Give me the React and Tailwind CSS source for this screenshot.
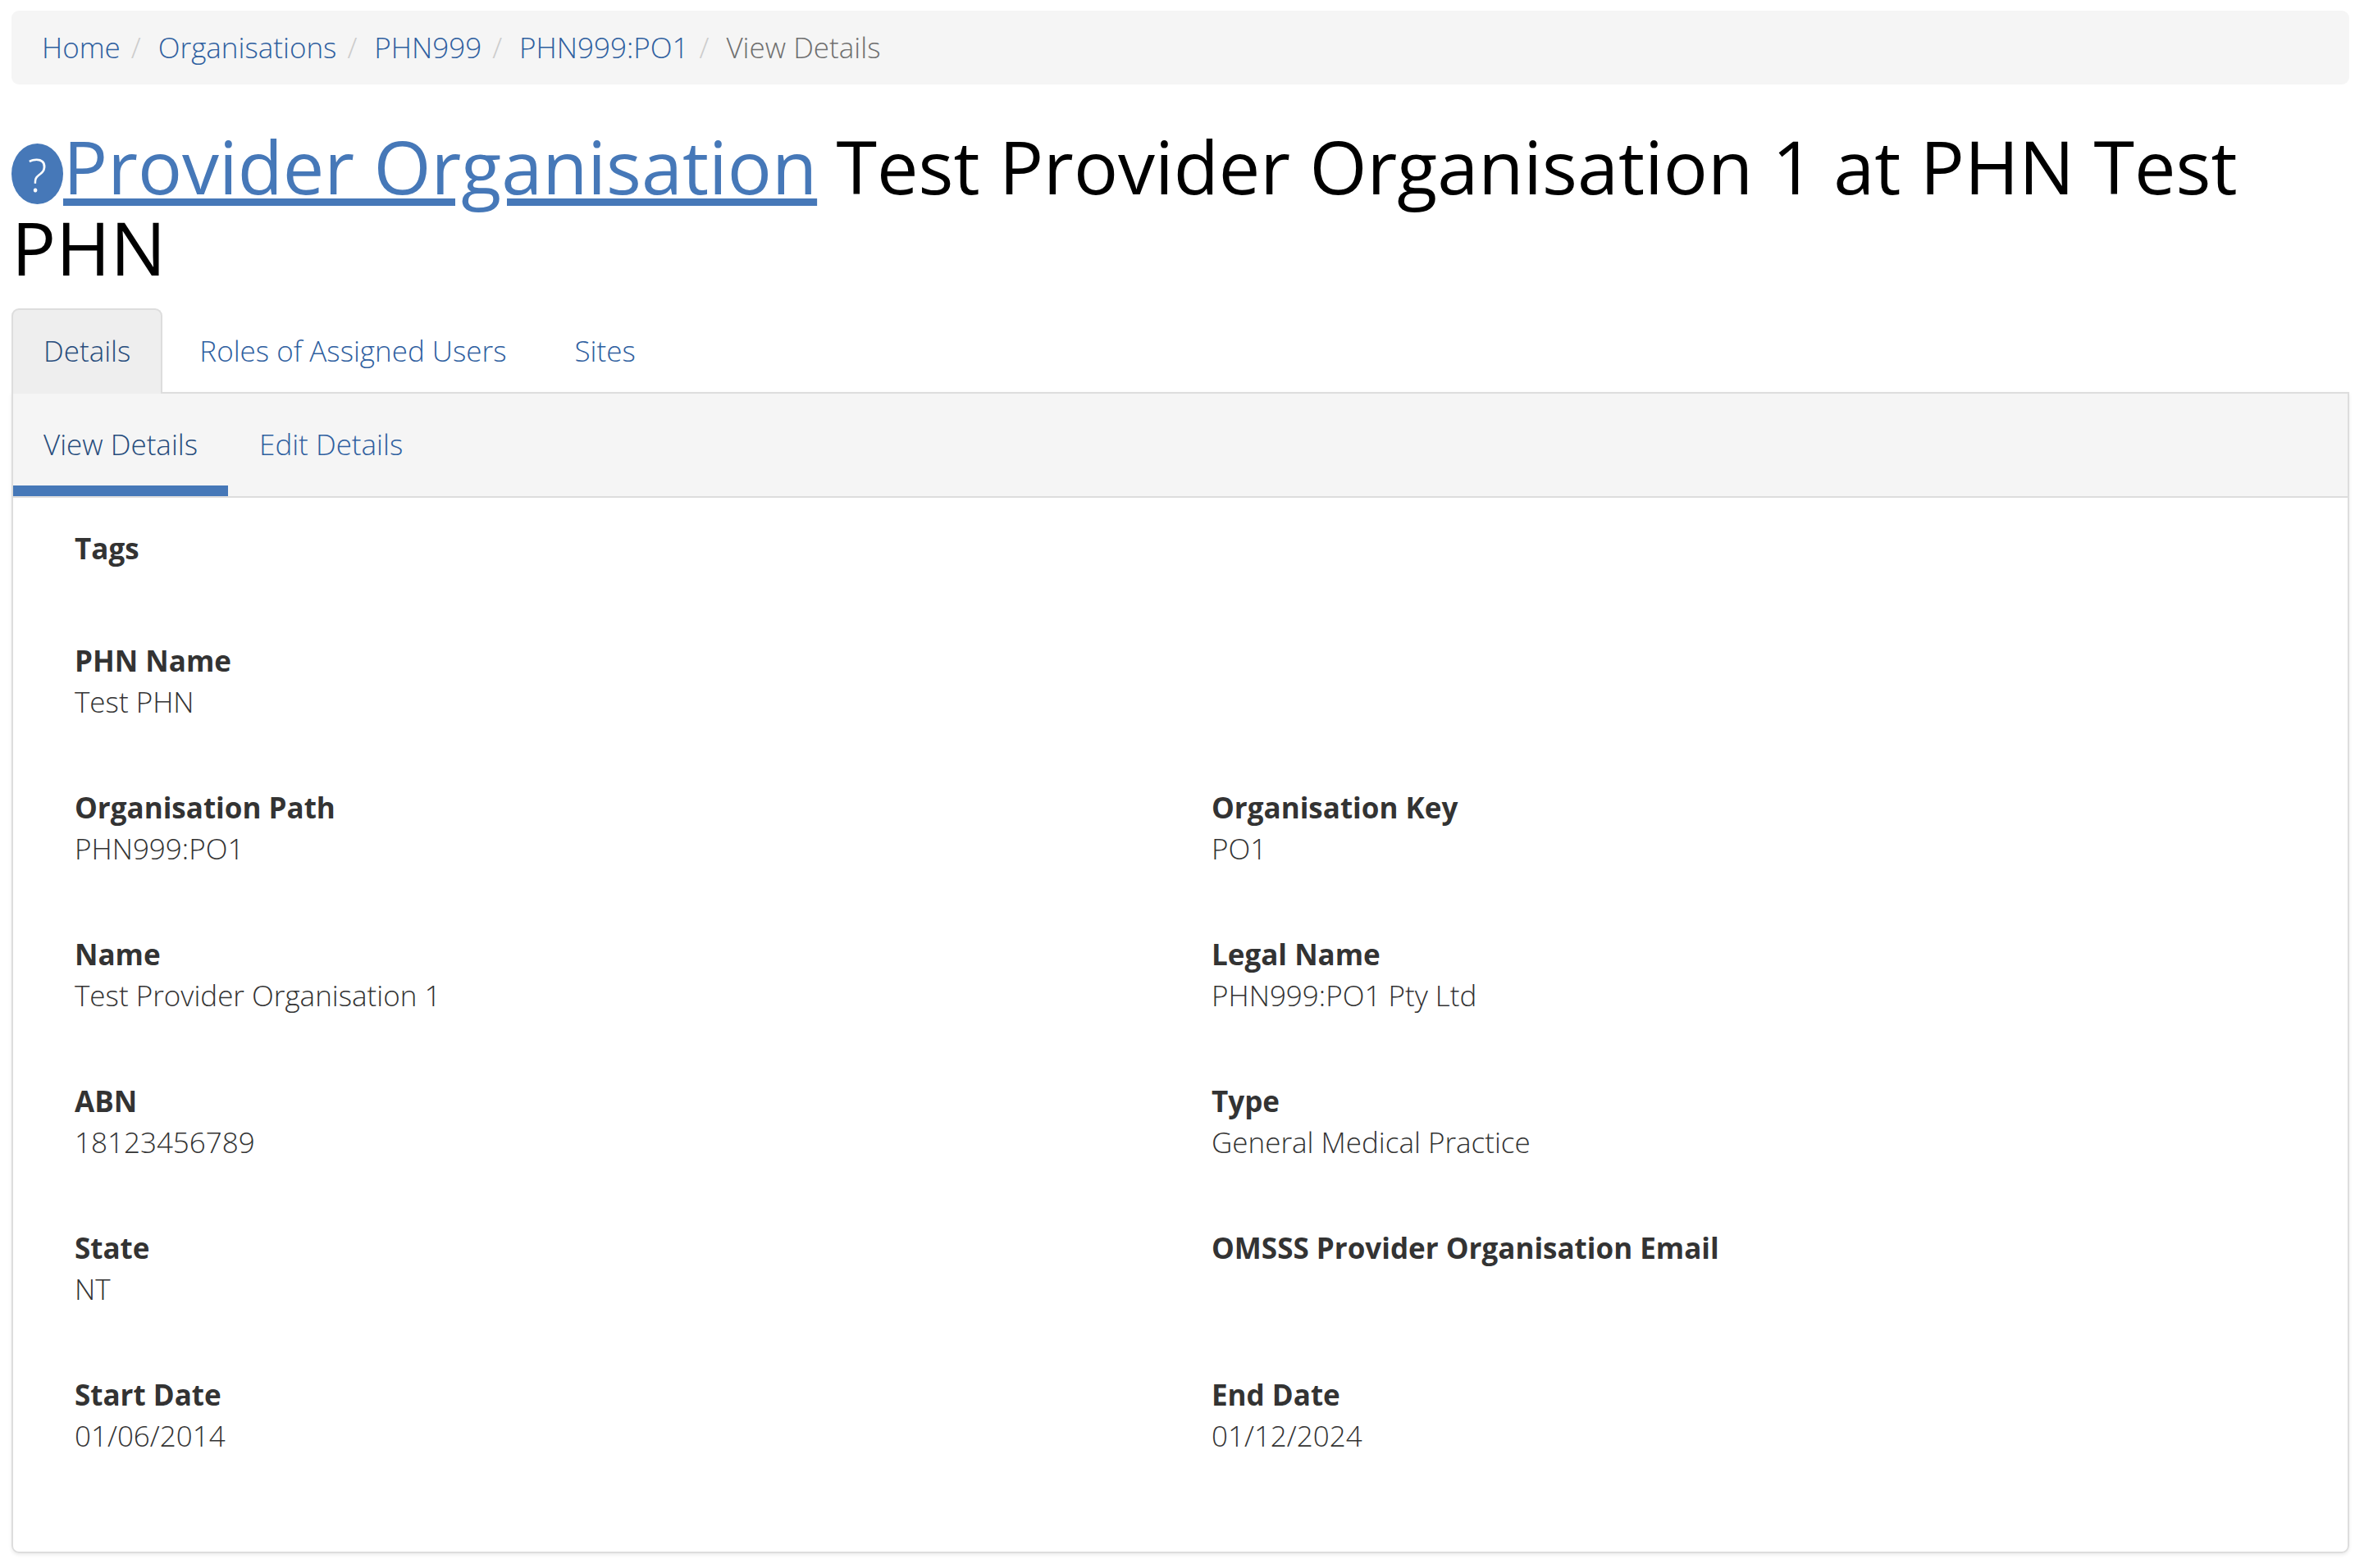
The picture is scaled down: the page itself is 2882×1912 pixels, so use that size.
const crumbs = ["Home", "Organisations", "PHN999", "PHN999:PO1"];

function Field({ label, value }) {
  return (
    <div className="px-[38px]">
      <dt className="font-bold">{label}</dt>
      <dd className="min-h-[50px]">{value}</dd>
    </div>
  );
}

const rows = [
  [["PHN Name", "Test PHN"]],
  [["Organisation Path", "PHN999:PO1"], ["Organisation Key", "PO1"]],
  [["Name", "Test Provider Organisation 1"], ["Legal Name", "PHN999:PO1 Pty Ltd"]],
  [["ABN", "18123456789"], ["Type", "General Medical Practice"]],
  [["State", "NT"], ["OMSSS Provider Organisation Email", ""]],
  [["Start Date", "01/06/2014"], ["End Date", "01/12/2024"]],
];

export default function App() {
  return (
    <div className="bg-white pt-[13px] pr-[18px] pb-[18px] pl-[14px] font-['Open_Sans',sans-serif] text-[35px] leading-[50px] font-light text-[#333333]">
      <nav aria-label="Breadcrumb" className="rounded-[9px] bg-[#f5f5f5] px-[37px] py-[20px]">
        <ol className="flex flex-wrap">
          {crumbs.map((c) => (
            <li key={c} className="flex">
              <a href="#" className="text-[#2f60a0]">{c}</a>
              <span className="pr-[21px] pl-[13px] text-[#cccccc]">/</span>
            </li>
          ))}
          <li aria-current="page" className="text-[#6f6f6f]">View Details</li>
        </ol>
      </nav>

      <h1 className="mt-[50px] text-[90px] leading-[99px] font-normal text-black">
        <button type="button" aria-label="Help" className="inline-flex h-[74px] w-[63px] items-center justify-center rounded-[50%] bg-[#4678b8] align-[3px] text-[56px] leading-[74px] font-light text-white">
          ?
        </button>
        <a href="#" className="text-[#4678b8] underline decoration-[9px] underline-offset-[5px]">Provider Organisation</a>{" "}
        Test Provider Organisation 1 at PHN Test PHN
      </h1>

      <nav aria-label="Sections" className="mt-[25px] flex">
        <a href="#" aria-current="page" className="relative z-10 -mb-[2px] rounded-t-[9px] border-2 border-b-0 border-[#dddddd] bg-[#eeeeee] px-[37px] pt-[25px] pb-[27px] text-[#264c7c]">Details</a>
        <a href="#" className="px-[45px] pt-[27px] pb-[25px] text-[#2f60a0]">Roles of Assigned Users</a>
        <a href="#" className="px-[38px] pt-[27px] pb-[25px] text-[#2f60a0]">Sites</a>
      </nav>

      <main className="rounded-b-[9px] border-2 border-[#dddddd] shadow-[0_2px_4px_rgba(0,0,0,0.08)]">
        <nav aria-label="Details" className="flex border-b-2 border-[#dddddd] bg-[#f5f5f5]">
          <a href="#" aria-current="page" className="border-b-[13px] border-[#4678b8] px-[37px] pt-[37px] pb-[25px] text-[#264c7c]">View Details</a>
          <a href="#" className="px-[38px] pt-[37px] pb-[38px] text-[#2f60a0]">Edit Details</a>
        </nav>
        <dl className="px-[37px] pt-[37px] pb-[37px]">
          <div className="mb-[87px] px-[38px]">
            <dt className="font-bold">Tags</dt>
          </div>
          {rows.map((row) => (
            <div key={row[0][0]} className="mb-[79px] grid grid-cols-2">
              {row.map(([label, value]) => (
                <Field key={label} label={label} value={value} />
              ))}
            </div>
          ))}
        </dl>
      </main>
    </div>
  );
}
